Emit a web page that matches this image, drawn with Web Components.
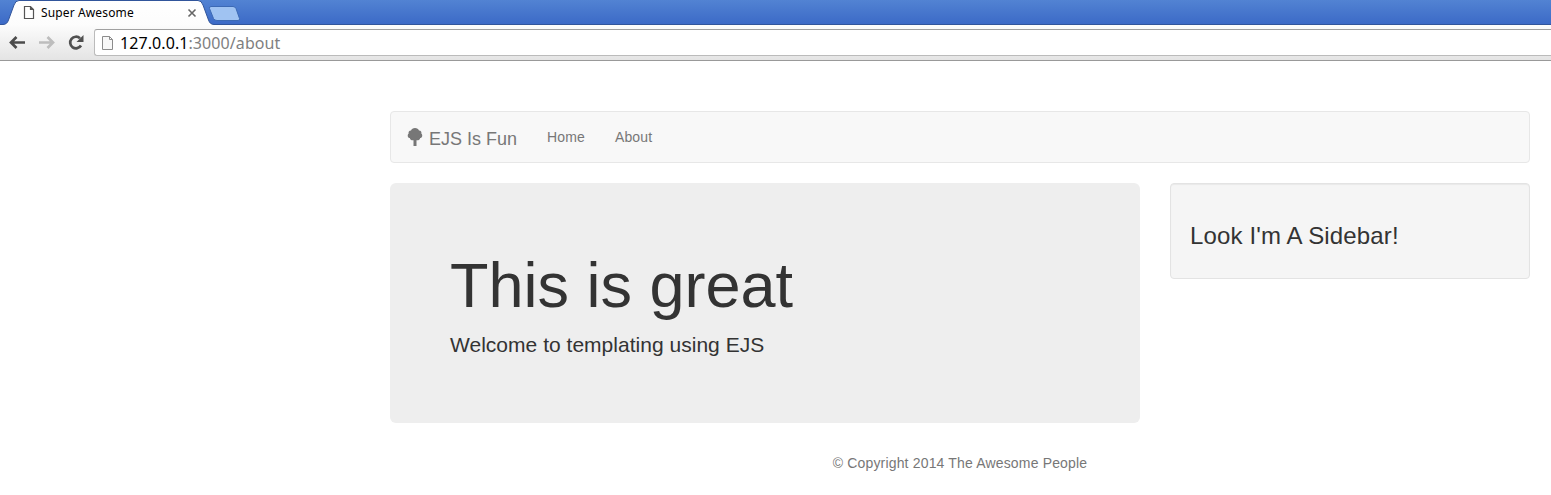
<!DOCTYPE html>
<html lang="en"><head><meta charset="utf-8"><title>Super Awesome</title>
<style>
body{margin:0;background:#fff;color:#333;font:14px/20px "Liberation Sans",Arial,sans-serif;overflow:hidden}
</style></head><body>
<browser-chrome><span slot="title">Super Awesome</span><span slot="host">127.0.0.1</span><span slot="path">:3000/about</span></browser-chrome>
<page-container>
<nav-bar slot="header"><span slot="brand">EJS Is Fun</span><nav-link>Home</nav-link><nav-link>About</nav-link></nav-bar>
<jumbo-tron><span slot="heading">This is great</span><span slot="lead">Welcome to templating using EJS</span></jumbo-tron>
<side-well>Look I'm A Sidebar!</side-well>
<page-footer slot="footer">© Copyright 2014 The Awesome People</page-footer>
</page-container>
<script>
const define=(name,html)=>customElements.define(name,class extends HTMLElement{
 constructor(){super();const t=document.createElement('template');t.innerHTML=html;this.attachShadow({mode:'open'}).append(t.content.cloneNode(true));}
});
define('browser-chrome',`<style>
:host{display:block;height:61px;font-family:"Noto Sans","Open Sans",sans-serif}
.strip{height:25px;box-sizing:border-box;display:grid;background:linear-gradient(#5283d3,#3b69c6)}
.strip>*{grid-area:1/1}
.tab{display:flex;align-items:center;height:25px;padding-left:23px;color:#000;font-size:12px}
.title{width:146px;margin-left:6px;line-height:24px;padding-top:1px;box-sizing:border-box;letter-spacing:.13px}
.bar{height:36px;box-sizing:border-box;display:flex;background:linear-gradient(#fcfcfc,#e4e4e4);border-bottom:1px solid #999;padding:4px 0 4px 8px}
.nav{flex:none}
.omni{flex:1;box-sizing:border-box;height:27px;border:1px solid #bbb;border-top-color:#a0a0a0;border-right:0;border-radius:3px 0 0 3px;background:#fff;display:flex;align-items:center;padding-left:6px;font-size:16px;line-height:25px}
.url{margin-left:6px;padding-top:2px;letter-spacing:.08px;color:#000}.path{color:#808080}
svg{display:block}
</style><div class="strip"><svg width="100%" height="25"><defs><linearGradient id="t" x2="0" y2="1"><stop stop-color="#fff"/><stop offset="1" stop-color="#fcfcfc"/></linearGradient></defs>
<path d="M-2 24.5H3Q7 24.5 8.5 20L14 5Q15.500 .5 19 .5H198Q201.500 .5 203 5L208.500 20Q210 24.500 214 24.500H3000V28H-2Z" fill="url(#t)" stroke="#31559b"/>
<path d="M211 6.500H233Q235 6.500 236 8.500L239.500 18.500Q240 20.500 238 20.500H217Q214.500 20.500 213.500 18.500L209.500 8.500Q209 6.500 211 6.500Z" fill="#a0c3f2" stroke="#3c69b4"/></svg>
<div class="tab"><svg width="12" height="15"><path d="M1.500 1.500H7.500L10.500 4.500V13.500H1.500ZM7.500 1.500V4.500H10.500" fill="#fff" stroke="#555" stroke-width="1.200"/></svg><span class="title"><slot name="title"></slot></span><svg width="10" height="10"><path d="M1.500 1.500L8.500 8.500M8.500 1.500L1.500 8.500" stroke="#666" stroke-width="1.600"/></svg></div></div>
<div class="bar"><svg class="nav" width="86" height="27" fill="none" stroke-width="2.700">
<g stroke="#4c4c4c"><path d="M3 13.500H17M8.500 8L3 13.500L8.500 19"/></g><g stroke="#bdbdbd"><path d="M31 13.500H45M39.500 8L45 13.500L39.500 19"/></g>
<path d="M72 9.300A5.800 5.800 0 1 0 73 16.500" stroke="#505050"/><path d="M75.500 6V13H68.500Z" fill="#505050"/></svg>
<div class="omni"><svg width="13" height="16"><path d="M1.500 1.500H8.500L11.500 4.500V14.500H1.500ZM8.500 1.500V4.500H11.500" fill="#f8f8f8" stroke="#8c8c8c"/></svg><span class="url"><slot name="host"></slot><span class="path"><slot name="path"></slot></span></span></div></div>`);
define('page-container',`<style>:host{display:block;width:1140px;margin:50px 21px 0 390px}.row{display:grid;grid-template-columns:750px 360px;gap:30px;align-items:start;margin:20px 0 30px}</style><slot name="header"></slot><div class="row"><slot></slot></div><slot name="footer"></slot>`);
define('nav-bar',`<style>:host{display:flex;height:52px;box-sizing:border-box;border:1px solid #e7e7e7;border-radius:4px;background:#f8f8f8;color:#777;padding-left:15px}
.brand{display:flex;align-items:center;width:126px;font-size:18px;line-height:20px;padding-top:3px;box-sizing:border-box}svg{margin:-4px 6px 0 1px}</style>
<div class="brand"><svg width="16" height="18" viewBox="0 0 16 18" fill="#777"><path d="M8 0C10 0 11.500 1 12 2.400C14 2.400 14.800 4 14.300 5.400C16 6.700 15.300 9.800 13.200 10C13 11.600 11 12.800 9.500 12.200V18H6.500V12.200C5 12.800 3 11.600 2.800 10C.7 9.800 0 6.700 1.700 5.400C1.200 4 2 2.400 4 2.400C4.500 1 6 0 8 0Z"/></svg><slot name="brand"></slot></div><slot></slot>`);
define('nav-link',`<style>:host{display:block;padding:15px;line-height:20px;letter-spacing:.14px}</style><slot></slot>`);
define('jumbo-tron',`<style>:host{display:block;height:240px;box-sizing:border-box;border-radius:6px;background:#eee;padding:68px 60px 0}h1{font-weight:400;font-size:63px;line-height:69px;margin:0 0 10px}p{margin:0;font-size:21px;line-height:30px;letter-spacing:.02px}</style><h1><slot name="heading"></slot></h1><p><slot name="lead"></slot></p>`);
define('side-well',`<style>:host{display:block;height:96px;box-sizing:border-box;border:1px solid #e3e3e3;border-radius:4px;background:#f5f5f5;box-shadow:inset 0 1px 1px rgba(0,0,0,.05);padding:39px 19px 0}h3{font-size:24px;line-height:26px;font-weight:400;margin:0;letter-spacing:.14px}</style><h3><slot></slot></h3>`);
define('page-footer',`<style>:host{display:block;text-align:center;color:#777;letter-spacing:.165px}</style><slot></slot>`);
</script></body></html>
